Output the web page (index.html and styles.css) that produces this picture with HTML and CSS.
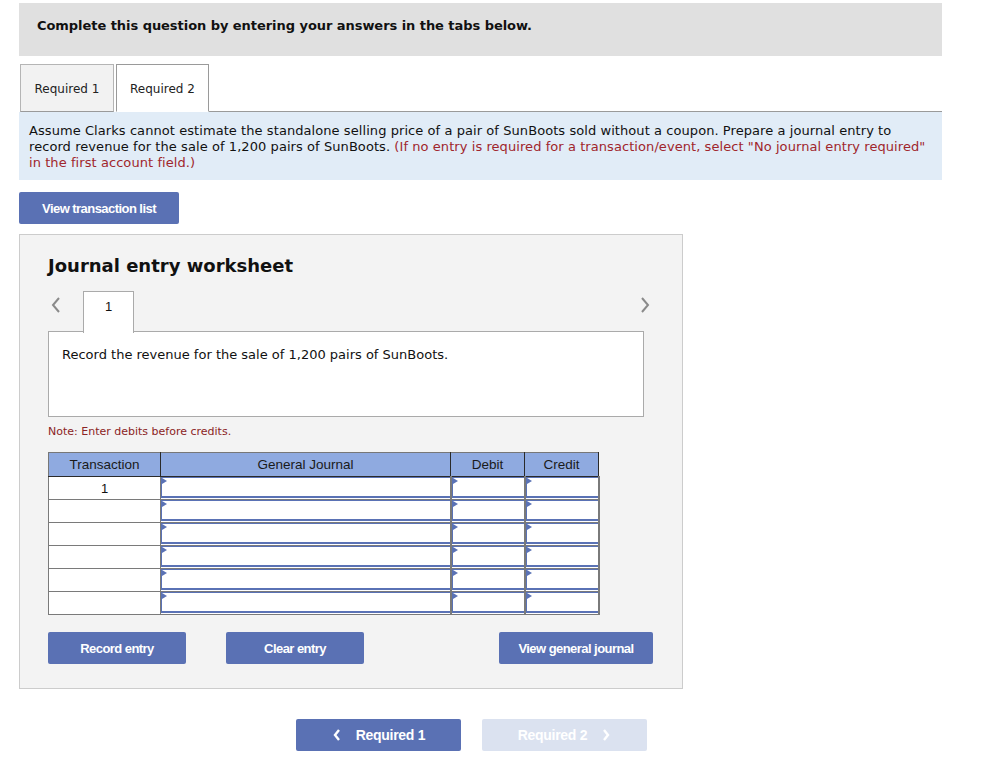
FILE: index.html
```html
<!DOCTYPE html>
<html>
<head>
<meta charset="utf-8">
<link rel="stylesheet" href="styles.css">
</head>
<body>
<div class="page">
  <div class="banner">Complete this question by entering your answers in the tabs below.</div>

  <div class="tabs">
    <div class="tab">Required 1</div>
    <div class="tab active">Required 2</div>
    <div class="tab-fill"></div>
  </div>

  <div class="instr">Assume Clarks cannot estimate the standalone selling price of a pair of SunBoots sold without a coupon. Prepare a journal entry to record revenue for the sale of 1,200 pairs of SunBoots. <span class="red">(If no entry is required for a transaction/event, select "No journal entry required" in the first account field.)</span></div>

  <div class="btn-row-top"><button class="btn btn-list">View transaction list</button></div>

  <div class="panel">
    <h2 class="title">Journal entry worksheet</h2>
    <div class="nav">
      <div class="left">
        <svg class="chev" width="12" height="18" viewBox="0 0 12 18"><polyline points="9,2 3,9 9,16" fill="none" stroke="#8a8a8a" stroke-width="2"/></svg>
        <div class="numtab">1</div>
      </div>
      <svg class="chev right" width="12" height="18" viewBox="0 0 12 18"><polyline points="3,2 9,9 3,16" fill="none" stroke="#8a8a8a" stroke-width="2"/></svg>
    </div>
    <div class="desc">Record the revenue for the sale of 1,200 pairs of SunBoots.</div>
    <div class="note">Note: Enter debits before credits.</div>

    <table class="jt">
      <thead>
        <tr><th class="c1">Transaction</th><th class="c2">General Journal</th><th class="c3">Debit</th><th class="c4">Credit</th></tr>
      </thead>
      <tbody>
        <tr><td class="tx">1</td><td class="in"><div class="box"></div></td><td class="in"><div class="box"></div></td><td class="in"><div class="box"></div></td></tr>
        <tr><td class="tx"></td><td class="in"><div class="box"></div></td><td class="in"><div class="box"></div></td><td class="in"><div class="box"></div></td></tr>
        <tr><td class="tx"></td><td class="in"><div class="box"></div></td><td class="in"><div class="box"></div></td><td class="in"><div class="box"></div></td></tr>
        <tr><td class="tx"></td><td class="in"><div class="box"></div></td><td class="in"><div class="box"></div></td><td class="in"><div class="box"></div></td></tr>
        <tr><td class="tx"></td><td class="in"><div class="box"></div></td><td class="in"><div class="box"></div></td><td class="in"><div class="box"></div></td></tr>
        <tr><td class="tx"></td><td class="in"><div class="box"></div></td><td class="in"><div class="box"></div></td><td class="in"><div class="box"></div></td></tr>
      </tbody>
    </table>

    <div class="actions">
      <button class="btn btn-act">Record entry</button>
      <button class="btn btn-act btn-clear">Clear entry</button>
      <button class="btn btn-act btn-view">View general journal</button>
    </div>
  </div>

  <div class="bottom-nav">
    <button class="btn nav-btn"><svg width="10" height="14" viewBox="0 0 10 14"><polyline points="7,2 3,7 7,12" fill="none" stroke="#fff" stroke-width="2.4"/></svg><span>Required 1</span></button>
    <button class="btn nav-btn disabled"><span>Required 2</span><svg width="10" height="14" viewBox="0 0 10 14"><polyline points="3,2 7,7 3,12" fill="none" stroke="#fff" stroke-width="2.4"/></svg></button>
  </div>
</div>
</body>
</html>
```

FILE: styles.css
```css
* { box-sizing: border-box; }
html, body { margin: 0; padding: 0; background: #fff; }
body { font-family: "DejaVu Sans", Verdana, sans-serif; color: #111; }
.page { width: 942px; padding: 3px 0 0 19px; }

.banner {
  background: #e0e0e0;
  height: 53px;
  padding: 15px 0 0 18px;
  font-weight: bold;
  font-size: 13px;
  line-height: 16px;
  letter-spacing: -0.05px;
  color: #111;
}

.tabs { display: flex; margin-top: 8px; height: 48px; }
.tab {
  width: 94px;
  height: 48px;
  background: #f2f2f2;
  border: 1px solid #b5b5b5;
  border-bottom: 1px solid #9a9a9a;
  font-size: 12px;
  line-height: 48px;
  text-align: center;
  color: #222;
  margin-right: 2px;
  margin-left: 1px;
}
.tab.active { background: #fff; border-color: #9a9a9a; border-bottom-color: #fff; margin-left: 0; width: 93px; margin-right: 0; }
.tab-fill { flex: 1; border-bottom: 1px solid #9a9a9a; }

.instr {
  background: #e1ecf7;
  padding: 11px 8px 9px 10px;
  font-size: 13px;
  line-height: 16px;
  letter-spacing: 0.07px;
  color: #111;
}
.red { color: #a0262c; }

.btn {
  border: none;
  border-radius: 2px;
  background: #5a71b4;
  color: #fff;
  font-family: "Liberation Sans", Arial, sans-serif;
  font-weight: bold;
  font-size: 13px;
  letter-spacing: -0.55px;
  cursor: pointer;
  padding: 0;
}
.btn-row-top { margin-top: 12px; height: 32px; }
.btn-list { width: 160px; height: 32px; display: block; }

.panel {
  margin-top: 10px;
  width: 664px;
  background: #f3f3f3;
  border: 1px solid #cccccc;
  padding: 19px 28px 24px 28px;
}
.title {
  margin: 0;
  font-size: 18px;
  line-height: 24px;
  font-weight: bold;
  color: #111;
}
.nav {
  margin-top: 13px;
  width: 603px;
  height: 41px;
  display: flex;
  justify-content: space-between;
  align-items: flex-start;
}
.nav .left { display: flex; align-items: flex-start; }
.chev { margin-top: 5px; display: block; }
.nav .left .chev { margin-left: 2px; }
.numtab {
  margin-left: 21px;
  width: 51px;
  height: 42px;
  background: #fff;
  border: 1px solid #aaaaaa;
  border-bottom: none;
  text-align: center;
  font-family: "Liberation Sans", Arial, sans-serif;
  font-size: 13px;
  line-height: 30px;
  position: relative;
  z-index: 2;
}
.desc {
  width: 596px;
  height: 86px;
  margin-top: -1px;
  background: #fff;
  border: 1px solid #aaaaaa;
  padding: 15px 13px;
  font-size: 13px;
  line-height: 16px;
  color: #111;
}
.note {
  margin-top: 8px;
  font-size: 11px;
  line-height: 14px;
  color: #8b2424;
}

.jt {
  margin-top: 13px;
  border-collapse: collapse;
  width: 550px;
  table-layout: fixed;
  font-family: "Liberation Sans", Arial, sans-serif;
}
.jt th {
  background: #8faae0;
  height: 24px;
  font-size: 13.5px;
  font-weight: normal;
  color: #1a1a1a;
  border: 1px solid #2a2a2a;
  border-left-color: #777;
  border-top-color: #777;
  padding: 0;
}
.jt th.c1 { width: 112px; }
.jt th.c2 { width: 290px; }
.jt th.c3 { width: 74px; }
.jt th.c4 { width: 74px; }
.jt td {
  height: 23px;
  padding: 0;
  background: #fff;
}
.jt td.tx {
  border: 1px solid #7a7a7a;
  text-align: center;
  font-size: 13px;
  color: #111;
  vertical-align: middle;
}
.jt td.in {
  border: 1px solid #7a7a7a;
  border-width: 1px 2px 1px 1px;
  vertical-align: top;
}
.box {
  position: relative;
  height: 21px;
  border-top: 1px solid #5a72b5;
  border-bottom: 2px solid #5a72b5;
  border-left: 1px solid #5a72b5;
  background: #fff;
}
.box::before {
  content: "";
  position: absolute;
  left: 0;
  top: 0;
  border-left: 5px solid #5a72b5;
  border-top: 3px solid transparent;
  border-bottom: 3px solid transparent;
}

.actions {
  margin-top: 17px;
  width: 605px;
  display: flex;
  align-items: center;
}
.btn-act { height: 32px; width: 138px; }
.btn-clear { margin-left: 40px; }
.btn-view { margin-left: auto; width: 154px; }

.bottom-nav {
  margin-top: 30px;
  margin-left: 277px;
  display: flex;
  gap: 21px;
}
.nav-btn {
  width: 165px;
  height: 32px;
  font-size: 14px;
  letter-spacing: -0.3px;
  display: flex;
  align-items: center;
  justify-content: center;
  gap: 14px;
}
.nav-btn svg { display: block; }
.nav-btn.disabled { background: #dbe2f0; color: #fff; }
```
